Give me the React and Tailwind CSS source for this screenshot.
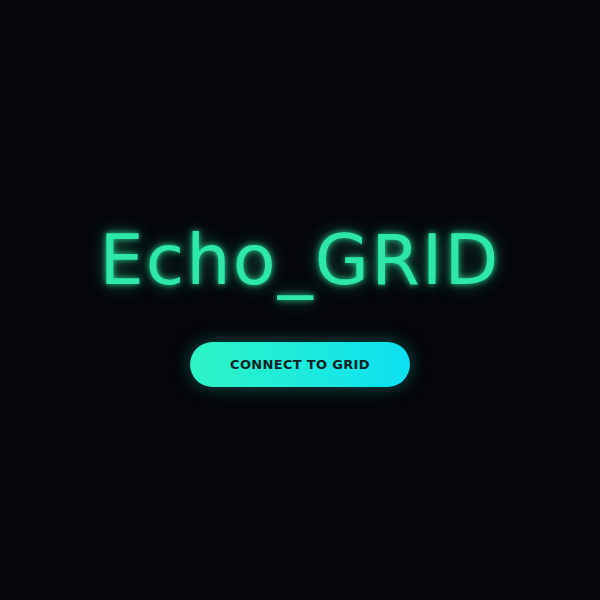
import React from 'react';

export default function App() {
  return (
    <div className="w-full h-screen bg-[#05060a] flex flex-col items-center justify-center" style={{ fontFamily: '"DejaVu Sans", sans-serif' }}>
      <h1 className="mt-3 text-[70px] leading-none font-normal text-[#2ee8a8] tracking-[0.03em] [text-shadow:0_0_6px_rgba(46,232,168,0.9),0_0_18px_rgba(46,232,168,0.45)]">
        Echo_GRID
      </h1>
      <button className="mt-[47px] w-[220px] h-[45px] rounded-full bg-gradient-to-r from-[#2ef5c4] to-[#0ce0f2] text-[#0a2224] text-[13px] font-semibold tracking-wide shadow-[0_0_18px_rgba(20,230,200,0.35)]">
        CONNECT TO GRID
      </button>
    </div>
  );
}
